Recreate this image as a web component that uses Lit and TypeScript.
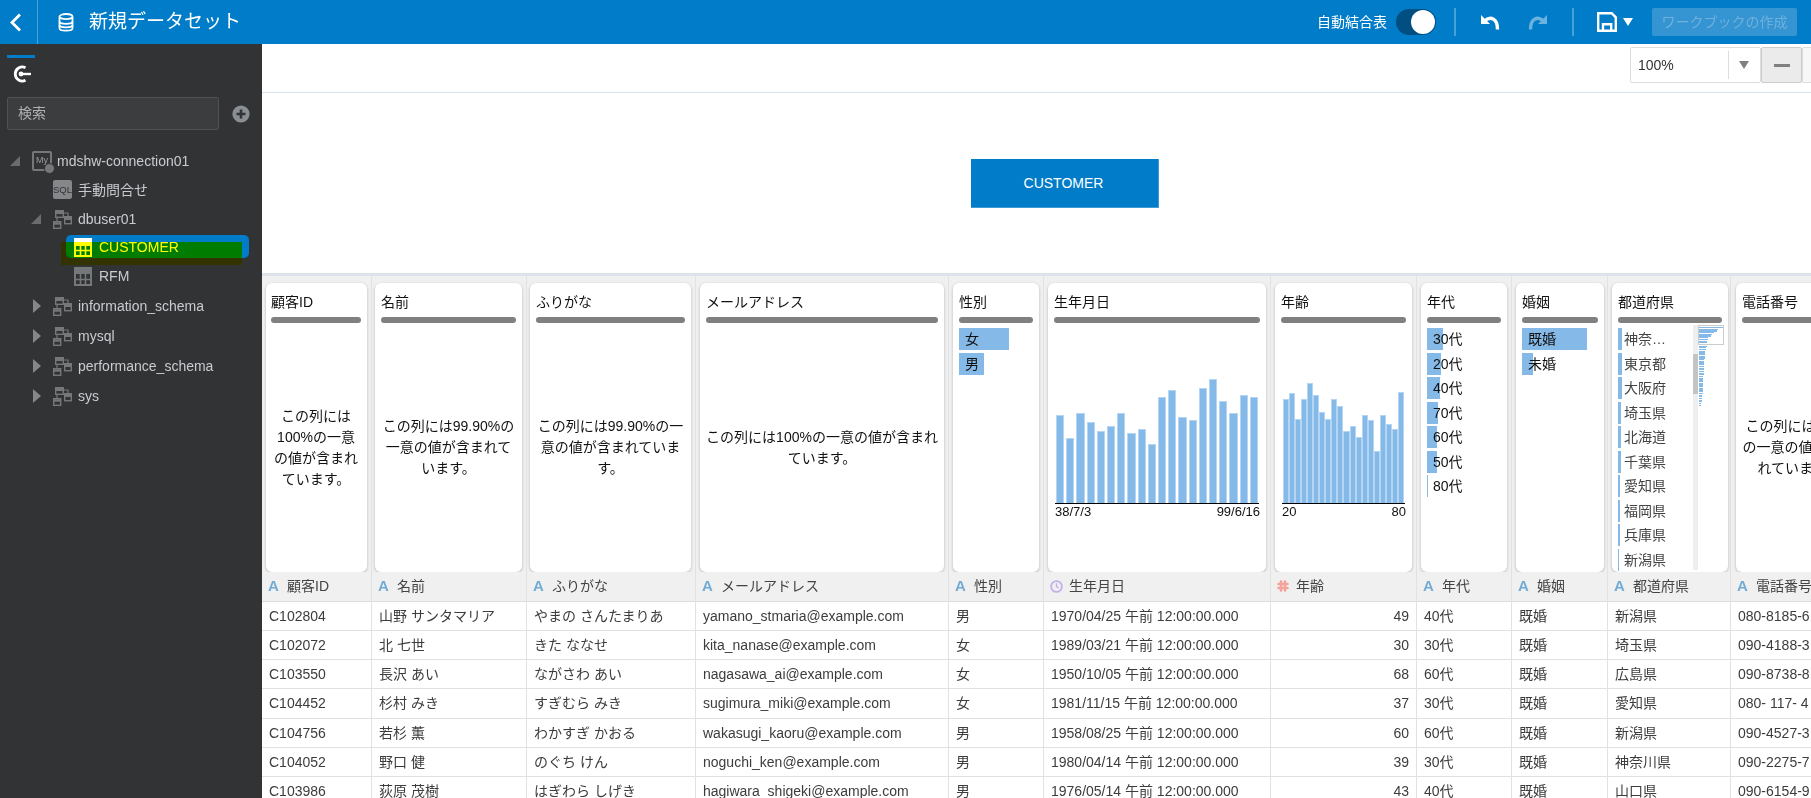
import { LitElement, html, css, svg } from "lit";
import { customElement } from "lit/decorators.js";

type Profile =
  | { kind: "msg"; text: string }
  | { kind: "hist"; bars: number[]; from: string; to: string; cls: string }
  | { kind: "cats"; items: [string, number][] }
  | { kind: "pref"; items: [string, number][]; mini: number[] };

interface Col {
  name: string;
  w: number;
  type: "A" | "clock" | "num";
  cls?: string;
  align?: string;
  cells: string[];
  profile: Profile;
}

const msg = (text: string): Profile => ({ kind: "msg", text });

const COLS: Col[] = [
  { name: "顧客ID", w: 110, type: "A", cls: "first", profile: msg("この列には100%の一意の値が含まれています。"),
    cells: ["C102804", "C102072", "C103550", "C104452", "C104756", "C104052", "C103986"] },
  { name: "名前", w: 155, type: "A", cls: "tight", profile: msg("この列には99.90%の一意の値が含まれています。"),
    cells: ["山野 サンタマリア", "北 七世", "長沢 あい", "杉村 みき", "若杉 薫", "野口 健", "荻原 茂樹"] },
  { name: "ふりがな", w: 169, type: "A", cls: "tight", profile: msg("この列には99.90%の一意の値が含まれています。"),
    cells: ["やまの さんたまりあ", "きた ななせ", "ながさわ あい", "すぎむら みき", "わかすぎ かおる", "のぐち けん", "はぎわら しげき"] },
  { name: "メールアドレス", w: 253, type: "A", profile: msg("この列には100%の一意の値が含まれています。"),
    cells: ["yamano_stmaria@example.com", "kita_nanase@example.com", "nagasawa_ai@example.com", "sugimura_miki@example.com", "wakasugi_kaoru@example.com", "noguchi_ken@example.com", "hagiwara_shigeki@example.com"] },
  { name: "性別", w: 95, type: "A", profile: { kind: "cats", items: [["女", 50], ["男", 25]] },
    cells: ["男", "女", "女", "女", "男", "男", "男"] },
  { name: "生年月日", w: 227, type: "clock",
    profile: { kind: "hist", cls: "date", from: "38/7/3", to: "99/6/16",
      bars: [88, 65, 90, 81, 72, 77, 90, 70, 74, 59, 106, 113, 86, 83, 115, 124, 102, 90, 108, 106] },
    cells: ["1970/04/25 午前 12:00:00.000", "1989/03/21 午前 12:00:00.000", "1950/10/05 午前 12:00:00.000", "1981/11/15 午前 12:00:00.000", "1958/08/25 午前 12:00:00.000", "1980/04/14 午前 12:00:00.000", "1976/05/14 午前 12:00:00.000"] },
  { name: "年齢", w: 146, type: "num", align: "right",
    profile: { kind: "hist", cls: "age", from: "20", to: "80",
      bars: [104, 110, 84, 104, 120, 108, 91, 84, 104, 97, 72, 77, 66, 88, 83, 52, 88, 79, 74, 111] },
    cells: ["49", "30", "68", "37", "60", "39", "43"] },
  { name: "年代", w: 95, type: "A",
    profile: { kind: "cats", items: [["30代", 16], ["20代", 14], ["40代", 13], ["70代", 11], ["60代", 10], ["50代", 10], ["80代", 1]] },
    cells: ["40代", "30代", "60代", "30代", "60代", "30代", "40代"] },
  { name: "婚姻", w: 96, type: "A", cls: "m3", profile: { kind: "cats", items: [["既婚", 65], ["未婚", 11]] },
    cells: ["既婚", "既婚", "既婚", "既婚", "既婚", "既婚", "既婚"] },
  { name: "都道府県", w: 123, type: "A", cls: "m2",
    profile: { kind: "pref",
      items: [["神奈川県", 4], ["東京都", 4], ["大阪府", 4], ["埼玉県", 3], ["北海道", 3], ["千葉県", 3], ["愛知県", 2], ["福岡県", 2], ["兵庫県", 2], ["新潟県", 1]],
      mini: [24, 19, 18, 15, 13, 12, 9, 9, 8, 8, 8, 8, 7, 7, 6, 6, 6, 6, 6, 5, 5, 5, 5, 5, 5, 5, 5, 5, 5, 4, 4, 4, 4, 4, 4, 4, 4, 4, 4, 4, 3, 3, 3, 3, 3, 2, 2] },
    cells: ["新潟県", "埼玉県", "広島県", "愛知県", "新潟県", "神奈川県", "山口県"] },
  { name: "電話番号", w: 136, type: "A", cls: "wide", profile: msg("この列には100%の一意の値が含まれています。"),
    cells: ["080-8185-6", "090-4188-3", "090-8738-8", "080- 117- 4", "090-4527-3", "090-2275-7", "090-6154-9"] },
];

const schemaIcon = svg`<svg class="ti" width="20" height="20" viewBox="0 0 20 20" fill="none" stroke="#75787b" stroke-width="1.4">
  <rect x="2.7" y="1.7" width="7.6" height="6.6"/><path d="M2.7 3.5h7.6" stroke-width="3"/>
  <rect x="11.7" y="7.7" width="6.6" height="7"/><path d="M11.7 9.5h6.6" stroke-width="3"/>
  <rect x="0.7" y="12.7" width="7" height="6.6"/><path d="M0.7 14.5h7" stroke-width="2.4"/>
  <path d="M10.3 4h4.7v3.7M4 8.3v4.4" stroke-width="1.2"/></svg>`;

const mysqlIcon = html`<span class="myicon"><span class="my">My</span><span class="mydot"></span></span>`;
const sqlIcon = html`<span class="sqlicon">SQL</span>`;

const tableWhite = svg`<svg class="ti" width="18" height="19" viewBox="0 0 18 19" fill="none" stroke="#fff">
  <rect x="0" y="0" width="18" height="6" fill="#fff" stroke="none"/>
  <rect x="1" y="7" width="16" height="11" stroke-width="2"/>
  <path d="M6.5 7v11M11.5 7v11M1 12.5h16" stroke-width="1.6"/></svg>`;

const tableGray = svg`<svg class="ti" width="18" height="19" viewBox="0 0 18 19" fill="none" stroke="#75787b">
  <rect x="0" y="0" width="18" height="6" fill="#75787b" stroke="none"/>
  <rect x="1" y="6" width="16" height="12" stroke-width="2"/>
  <path d="M6.5 7v11M11.5 7v11M1 12.5h16" stroke-width="1.6"/></svg>`;

const TREE = [
  { level: 0, arrow: "open", icon: mysqlIcon, label: "mdshw-connection01", cls: "h29" },
  { level: 1, arrow: "", icon: sqlIcon, label: "手動問合せ", cls: "h29" },
  { level: 1, arrow: "open", icon: schemaIcon, label: "dbuser01", cls: "h29" },
  { level: 2, arrow: "", icon: tableWhite, label: "CUSTOMER", cls: "sel" },
  { level: 2, arrow: "", icon: tableGray, label: "RFM", cls: "" },
  { level: 1, arrow: "closed", icon: schemaIcon, label: "information_schema", cls: "" },
  { level: 1, arrow: "closed", icon: schemaIcon, label: "mysql", cls: "" },
  { level: 1, arrow: "closed", icon: schemaIcon, label: "performance_schema", cls: "" },
  { level: 1, arrow: "closed", icon: schemaIcon, label: "sys", cls: "" },
];

@customElement("app-root")
export class AppRoot extends LitElement {
  static styles = css`
    :host {
      display: block;
      width: 1811px;
      height: 798px;
      overflow: hidden;
      font: 14px/20px "Liberation Sans", "Noto Sans CJK JP", sans-serif;
      color: #333;
      background: #fff;
    }
    .topbar {
      height: 44px;
      background: #007cc8;
      color: #fff;
      display: flex;
      align-items: center;
    }
    .back {
      width: 37px;
      height: 44px;
      border-right: 1px solid rgba(255, 255, 255, 0.3);
      display: flex;
      align-items: center;
    }
    .back svg { margin-left: 9px; }
    .db { margin-left: 20px; }
    .title { font-size: 19px; margin-left: 15px; }
    .tools { margin-left: auto; display: flex; align-items: center; height: 44px; padding-right: 14px; }
    .toggle {
      width: 40px;
      height: 26px;
      border-radius: 13px;
      background: #004f80;
      margin-left: 9px;
      display: flex;
      justify-content: flex-end;
      align-items: center;
      padding-right: 1px;
      box-sizing: border-box;
    }
    .knob { width: 24px; height: 24px; border-radius: 50%; background: #fff; }
    .vsep { width: 2px; height: 28px; background: rgba(255, 255, 255, 0.28); }
    .s1 { margin: 0 24px 0 18px; }
    .s2 { margin: 0 23px 0 24px; }
    .redo { margin-left: 28px; opacity: 0.42; }
    .caret { width: 0; height: 0; border: 5.5px solid transparent; border-top: 8px solid #fff; border-bottom: 0; margin-left: 6px; }
    .create {
      width: 145px;
      height: 28px;
      margin-left: 19px;
      background: #3595d3;
      border-radius: 2px;
      color: #70b0dc;
      display: flex;
      align-items: center;
      justify-content: center;
    }

    .body { display: flex; height: 754px; }
    .side { width: 262px; flex: none; background: #323335; color: #c8ccd0; display: flex; flex-direction: column; }
    .tab { width: 28px; height: 24px; margin: 11px 0 0 7px; border-top: 3px solid #007cc8; box-sizing: content-box; }
    .tab svg { display: block; margin: 7px 0 0 5px; }
    .searchrow { display: flex; align-items: center; margin: 15px 0 0 7px; }
    .search {
      width: 212px;
      height: 33px;
      box-sizing: border-box;
      border: 1px solid #505153;
      border-radius: 2px;
      background: #3c3d3f;
      color: #aeb0b2;
      padding-left: 10px;
      line-height: 31px;
    }
    .plus { margin-left: 13px; }
    .tree { padding-top: 16px; }
    .row { height: 30px; display: flex; align-items: center; position: relative; }
    .row.h29 { height: 29px; }
    .row.sel { height: 28px; color: #fff; }
    .lv0 { padding-left: 8px; }
    .lv1 { padding-left: 29px; }
    .lv2 { padding-left: 50px; }
    .arrow { width: 24px; flex: none; display: flex; align-items: center; }
    .arrow .op { margin-left: 2px; }
    .arrow .cl { margin-left: 3px; }
    .ico { width: 25px; flex: none; display: flex; align-items: center; position: relative; }
    .ti { display: block; position: relative; }
    .pill {
      position: absolute;
      left: 66px;
      top: 2px;
      width: 183px;
      height: 23px;
      background: #007cc8;
      border-radius: 5px;
    }
    .lbl { position: relative; white-space: nowrap; }
    .mark {
      position: absolute;
      left: 61px;
      top: 9px;
      width: 181px;
      height: 23px;
      background: #ffff00;
      mix-blend-mode: multiply;
    }
    .myicon {
      width: 20px;
      height: 20px;
      box-sizing: border-box;
      border: 2px solid #75787b;
      border-radius: 2px;
      display: block;
      position: relative;
    }
    .my { display: block; font-size: 9px; line-height: 14px; text-align: center; color: #9a9c9e; }
    .mydot {
      position: absolute;
      right: -5px;
      bottom: -5px;
      width: 9px;
      height: 9px;
      border-radius: 50%;
      background: #75787b;
      border: 1px solid #323335;
    }
    .sqlicon {
      width: 19px;
      height: 19px;
      display: block;
      background: #85878a;
      border-radius: 2px;
      font-size: 9.5px;
      line-height: 19px;
      text-align: center;
      color: #323335;
    }

    .main { flex: 1; min-width: 0; display: flex; flex-direction: column; overflow: hidden; }
    .toolbar {
      height: 48px;
      flex: none;
      box-sizing: content-box;
      border-bottom: 1px solid #d8e0e8;
      display: flex;
      justify-content: flex-end;
      align-items: flex-start;
    }
    .combo {
      width: 131px;
      height: 36px;
      box-sizing: border-box;
      border: 1px solid #ddd;
      border-radius: 2px;
      display: flex;
      align-items: center;
      padding-left: 7px;
      color: #333;
      margin-top: 3px;
    }
    .combo .v { width: 90px; }
    .combo .dv { width: 1px; height: 28px; background: #ddd; }
    .combo .tri { width: 0; height: 0; border: 5.5px solid transparent; border-top: 8px solid #808080; border-bottom: 0; margin-left: 10px; }
    .zbtn {
      width: 41px;
      height: 36px;
      flex: none;
      box-sizing: border-box;
      border: 1px solid #ccc;
      border-radius: 2px;
      background: #ebebeb;
      margin-top: 3px;
      display: flex;
      align-items: center;
      justify-content: center;
    }
    .zbtn i { display: block; width: 16px; height: 3px; background: #808080; }
    .zbtn.plusb { background: #f7f7f7; border-color: #ddd; margin-right: -32px; }
    .diagram { height: 180px; flex: none; position: relative; background: #fff; }
    .node {
      position: absolute;
      left: 709px;
      top: 66px;
      width: 188px;
      height: 49px;
      box-sizing: border-box;
      padding-right: 2px;
      background: #007cc8;
      border-right: 1px solid #3f9bd6;
      border-bottom: 1px solid #3f9bd6;
      color: #fff;
      display: flex;
      align-items: center;
      justify-content: center;
    }
    .band { height: 3px; flex: none; background: #dde3ea; }
    .tablewrap { display: flex; flex: 1; min-height: 0; overflow: hidden; width: 1600px; }
    .col { flex: none; box-sizing: border-box; border-right: 1px solid #e2e2e2; }
    .prof { height: 296px; background: #f0f0f0; padding-top: 7px; box-sizing: border-box; }
    .card {
      height: 289px;
      box-sizing: border-box;
      margin: 0 4px;
      padding: 9px 6px 0;
      background: #fff;
      border-radius: 6px;
      box-shadow: 0 1px 3px rgba(0, 0, 0, 0.25);
      display: flex;
      flex-direction: column;
      overflow: hidden;
      color: #111;
    }
    .tight .card { margin-left: 3px; }
    .m3 .card { margin-right: 3px; }
    .m2 .card { margin-right: 2px; }
    .wide .card { margin-left: 5px; margin-right: 5px; }
    .first .card { padding-left: 5px; }
    .ct { height: 20px; flex: none; white-space: nowrap; }
    .cbar { height: 6px; flex: none; margin-top: 5px; border-radius: 3px; background: #808080; }
    .msg { flex: 1; display: flex; align-items: center; justify-content: center; text-align: center; line-height: 21px; }
    .hist { flex: 1; }
    .chart {
      height: 181px;
      box-sizing: border-box;
      display: flex;
      align-items: flex-end;
      border-bottom: 1px solid #000;
      margin: 0 1px;
    }
    .date .chart { gap: 2px; padding: 0 1px; }
    .age .chart { gap: 0; padding: 0 1px; }
    .b { flex: 1; min-width: 0; background: #85b9e8; box-sizing: border-box; border: 1px solid #b4d5f3; border-bottom: 0; }
    .axis { display: flex; justify-content: space-between; font-size: 13px; line-height: 16px; margin: 0 0 0 1px; }
    .cats { padding-top: 5px; flex: 1; min-width: 0; }
    .cat {
      height: 22px;
      margin-bottom: 2.5px;
      line-height: 22px;
      padding-left: 6px;
      background-image: linear-gradient(#85b9e8, #85b9e8);
      background-repeat: no-repeat;
      white-space: nowrap;
    }
    .prefwrap { flex: 1; display: flex; min-height: 0; margin-right: -2px; margin-top: 2px; margin-bottom: 2px; }
    .prefwrap .cats { padding-top: 3px; color: #444; }
    .prefwrap .cat { overflow: hidden; text-overflow: ellipsis; padding-right: 27px; }
    .track { width: 5px; flex: none; background: #eee; padding-top: 29px; }
    .thumb { height: 40px; background: #c4c4c4; }
    .mini { width: 26px; flex: none; position: relative; padding: 2px 0 0 1px; box-sizing: border-box; }
    .mini i { display: block; height: 1.2px; margin-bottom: 0.5px; background: #85b9e8; }
    .view { position: absolute; left: 0; top: 0; width: 26px; height: 20px; box-sizing: border-box; border: 1px solid #ccc; }
    .hcell {
      height: 30px;
      box-sizing: border-box;
      background: #f0f0f0;
      border-bottom: 1px solid #ddd;
      display: flex;
      align-items: center;
      padding: 0 0 1px 6px;
      color: #444;
      white-space: nowrap;
    }
    .hico { width: 19px; flex: none; display: flex; align-items: center; }
    .aglyph { font-size: 15px; font-weight: bold; color: #72abd4; line-height: 18px; }
    .cell {
      height: 29px;
      box-sizing: border-box;
      border-bottom: 1px solid #e0e0e0;
      line-height: 28px;
      padding: 0 7px;
      white-space: nowrap;
      overflow: hidden;
      color: #3c3c3c;
      background: #fff;
    }
    .cell:nth-child(4) { height: 30px; line-height: 29px; }
    .cells .right { text-align: right; }
  `;

  private renderProfile(c: Col) {
    const p = c.profile;
    if (p.kind === "msg") return html`<div class="msg">${p.text}</div>`;
    if (p.kind === "hist")
      return html`<div class="hist ${p.cls}">
        <div class="chart">${p.bars.map((h) => html`<div class="b" style="height:${h}px"></div>`)}</div>
        <div class="axis"><span>${p.from}</span><span>${p.to}</span></div>
      </div>`;
    const row = ([t, w]: [string, number]) =>
      html`<div class="cat" style="background-size:${w}px 100%">${t}</div>`;
    if (p.kind === "cats") return html`<div class="cats">${p.items.map(row)}</div>`;
    return html`<div class="prefwrap">
      <div class="cats">${p.items.map(row)}</div>
      <div class="track"><div class="thumb"></div></div>
      <div class="mini">${p.mini.map((w) => html`<i style="width:${w}px"></i>`)}<div class="view"></div></div>
    </div>`;
  }

  private typeIcon(t: Col["type"]) {
    if (t === "A") return html`<span class="aglyph">A</span>`;
    if (t === "clock")
      return html`<svg width="13" height="13" viewBox="0 0 13 13" fill="none" stroke="#c4b0e8" stroke-width="1.8">
        <circle cx="6.5" cy="6.5" r="5.4"/><path d="M6.5 3.2v3.5l2.2 1.3" stroke-width="1.4"/></svg>`;
    return html`<svg width="12" height="12" viewBox="0 0 12 12" fill="none" stroke="#f4a49a" stroke-width="2.6" stroke-linecap="round">
      <path d="M4 1.5v9M8 1.5v9M1.5 4h9M1.5 8h9"/></svg>`;
  }

  render() {
    return html`
      <div class="topbar">
        <div class="back">
          <svg width="13" height="19" viewBox="0 0 13 19" fill="none" stroke="#fff" stroke-width="2.8"><path d="M11 1.5 3 9.5l8 8"/></svg>
        </div>
        <svg class="db" width="16" height="19" viewBox="0 0 16 19" fill="none" stroke="#fff" stroke-width="1.8">
          <path d="M1.5 4v11.2c0 1.4 2.9 2.4 6.5 2.4s6.5-1 6.5-2.4V4"/>
          <ellipse cx="8" cy="3.6" rx="6.5" ry="2.6"/>
          <path d="M1.5 8.5c0 1.3 2.9 2.3 6.5 2.3s6.5-1 6.5-2.3M1.5 12c0 1.3 2.9 2.3 6.5 2.3s6.5-1 6.5-2.3"/>
        </svg>
        <div class="title">新規データセット</div>
        <div class="tools">
          <span>自動結合表</span>
          <div class="toggle"><div class="knob"></div></div>
          <div class="vsep s1"></div>
          <svg width="20" height="17" viewBox="0 0 20 17" fill="none">
            <path d="M1 1v9h9z" fill="#fff"/>
            <path d="M5 6.5C10 2.5 17.5 3.5 17.5 15.5" stroke="#fff" stroke-width="3.4"/>
          </svg>
          <svg class="redo" width="20" height="17" viewBox="0 0 20 17" fill="none">
            <path d="M19 1v9h-9z" fill="#fff"/>
            <path d="M15 6.5C10 2.5 2.5 3.5 2.5 15.5" stroke="#fff" stroke-width="3.4"/>
          </svg>
          <div class="vsep s2"></div>
          <svg width="20" height="20" viewBox="0 0 20 20" fill="none" stroke="#fff" stroke-width="2.4">
            <path d="M1.2 1.2h13.5l4.1 4.1v13.5H1.2z"/>
            <path d="M6 18.5v-6.3h8.2v6.3"/>
          </svg>
          <div class="caret"></div>
          <div class="create">ワークブックの作成</div>
        </div>
      </div>
      <div class="body">
        <aside class="side">
          <div class="tab">
            <svg width="20" height="18" viewBox="0 0 20 18" fill="none" stroke="#fff">
              <path d="M13.5 2.8A7 7 0 1 0 13.5 15.2" stroke-width="2.8"/>
              <path d="M19 9H9" stroke-width="2.4"/>
              <circle cx="9" cy="9" r="2.4" fill="#fff" stroke="none"/>
            </svg>
          </div>
          <div class="searchrow">
            <div class="search">検索</div>
            <svg class="plus" width="18" height="18" viewBox="0 0 18 18">
              <circle cx="9" cy="9" r="8.6" fill="#8a8f96"/>
              <path d="M9 4.5v9M4.5 9h9" stroke="#323335" stroke-width="2.6"/>
            </svg>
          </div>
          <div class="tree">
            ${TREE.map(
              (t) => html`<div class="row lv${t.level} ${t.cls}">
                ${t.cls === "sel" ? html`<div class="pill"></div>` : ""}
                <span class="arrow">
                  ${t.arrow === "open"
                    ? html`<svg class="op" width="10" height="10" viewBox="0 0 10 10"><path d="M10 0v10H0z" fill="#6a6c6e"/></svg>`
                    : t.arrow === "closed"
                    ? html`<svg class="cl" width="9" height="14" viewBox="0 0 9 14"><path d="M1 0l8 7-8 7z" fill="#85878a"/></svg>`
                    : ""}
                </span>
                <span class="ico">${t.icon}</span>
                <span class="lbl">${t.label}</span>
                ${t.cls === "sel" ? html`<div class="mark"></div>` : ""}
              </div>`
            )}
          </div>
        </aside>
        <main class="main">
          <div class="toolbar">
            <div class="combo"><span class="v">100%</span><span class="dv"></span><span class="tri"></span></div>
            <div class="zbtn"><i></i></div>
            <div class="zbtn plusb"></div>
          </div>
          <div class="diagram"><div class="node">CUSTOMER</div></div>
          <div class="band"></div>
          <div class="tablewrap">
            ${COLS.map(
              (c) => html`<div class="col ${c.cls ?? ""}" style="width:${c.w}px">
                <div class="prof">
                  <div class="card">
                    <div class="ct">${c.name}</div>
                    <div class="cbar"></div>
                    ${this.renderProfile(c)}
                  </div>
                </div>
                <div class="hcell"><span class="hico">${this.typeIcon(c.type)}</span>${c.name}</div>
                <div class="cells">
                  ${c.cells.map((v) => html`<div class="cell ${c.align ?? ""}">${v}</div>`)}
                </div>
              </div>`
            )}
          </div>
        </main>
      </div>
    `;
  }
}
